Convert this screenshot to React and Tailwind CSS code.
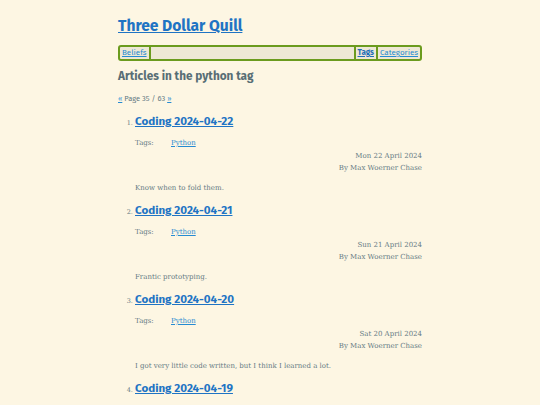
import React from 'react';

const posts = [
    { title: 'Coding 2024-04-22', date: 'Mon 22 April 2024', summary: 'Know when to fold them.' },
    { title: 'Coding 2024-04-21', date: 'Sun 21 April 2024', summary: 'Frantic prototyping.' },
    { title: 'Coding 2024-04-20', date: 'Sat 20 April 2024', summary: 'I got very little code written, but I think I learned a lot.' },
    { title: 'Coding 2024-04-19', date: 'Fri 19 April 2024', summary: 'More work on the prototype.' },
];

const sans = "font-['Fira_Sans','Lato','Open_Sans',sans-serif]";
const serif = "font-['Roboto_Slab','DejaVu_Serif',serif]";

const App = () => {
    return (
        <div className="min-h-screen bg-[#fdf6e3] text-[#657b83]">
            <div className="mx-auto w-[304px] pt-[15px]">
                <h1 className={`${sans} text-[15.6px] leading-[22px] font-bold`}>
                    <a href="#" className="text-[#1f74c4] underline">Three Dollar Quill</a>
                </h1>

                <nav className={`${sans} mt-[8px] flex h-[16px] items-stretch rounded-[3px] border-2 border-[#6b9b1e] bg-[#eee8d5] text-[8px] leading-[12px]`}>
                    <a href="#" className="px-[2px] text-[#268bd2] underline">Beliefs</a>
                    <span className="w-[2px] bg-[#6b9b1e]"></span>
                    <span className="flex-1"></span>
                    <span className="w-[2px] bg-[#6b9b1e]"></span>
                    <a href="#" className="px-[2px] font-bold text-[#1f6fb8] underline">Tags</a>
                    <span className="w-[2px] bg-[#6b9b1e]"></span>
                    <a href="#" className="px-[2px] text-[#268bd2] underline">Categories</a>
                </nav>

                <h2 className={`${sans} mt-[7px] text-[11.8px] leading-[16px] font-bold text-[#586e75]`}>
                    Articles in the python tag
                </h2>

                <p className={`${sans} mt-[10px] text-[7.5px] leading-[10px] text-[#657b83]`}>
                    <a href="#" className="text-[#268bd2] underline">«</a> Page 35 / 63 <a href="#" className="text-[#268bd2] underline">»</a>
                </p>

                <ol className={`${serif} mt-[9px] list-decimal pl-[17px] text-[6.5px] marker:text-[#657b83]`}>
                    {posts.map((post, i) => (
                        <li key={post.title} className={i > 0 ? 'mt-[8px]' : ''}>
                            <h3 className={`${sans} text-[11.6px] leading-[16px] font-bold`}>
                                <a href="#" className="text-[#1f74c4] underline">{post.title}</a>
                            </h3>
                            <div className="mt-[8px] flex text-[7px] leading-[12px]">
                                <span className="w-[36px]">Tags:</span>
                                <a href="#" className="text-[#268bd2] underline">Python</a>
                            </div>
                            <div className="mt-[1px] text-right text-[7px] leading-[12px]">
                                <div>{post.date}</div>
                                <div>By Max Woerner Chase</div>
                            </div>
                            <p className="mt-[8px] text-[7px] leading-[12px]">{post.summary}</p>
                        </li>
                    ))}
                </ol>
            </div>
        </div>
    );
};

export default App;
